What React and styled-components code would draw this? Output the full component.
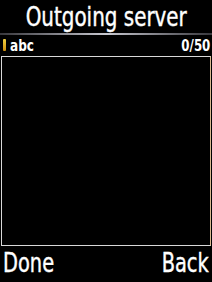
import React from "react";
import styled, { createGlobalStyle } from "styled-components";

const Global = createGlobalStyle`
  html, body { margin: 0; padding: 0; background: #000; }
  body { width: 212px; height: 282px; overflow: hidden; font-family: "DejaVu Sans Condensed", "DejaVu Sans", sans-serif; }
`;

const Screen = styled.div`
  width: 212px;
  height: 282px;
  background: #000;
  color: #fff;
  display: flex;
  flex-direction: column;
`;

const Narrow = styled.span`
  display: inline-block;
  white-space: nowrap;
  transform: scaleX(${(p) => p.$s || 0.84});
  transform-origin: ${(p) => p.$origin || "center"};
`;

const Title = styled.div`
  height: 33px;
  display: flex;
  align-items: center;
  justify-content: center;
  font-size: 27px;
  line-height: 1;
  padding-bottom: 1px;
  box-sizing: border-box;
  -webkit-text-stroke: 0.4px #fff;
`;

const Divider = styled.div`
  height: 2px;
  background: linear-gradient(to right, rgba(110,110,120,0.5), #c8c8d0 50%, rgba(110,110,120,0.5));
`;

const InputRow = styled.div`
  height: 21px;
  display: flex;
  align-items: center;
  padding: 0 2px 0 3px;
  font-size: 16px;
  font-weight: bold;
  line-height: 1;
`;

const Cursor = styled.span`
  width: 3px;
  height: 12px;
  border-radius: 1px;
  background: linear-gradient(to bottom, #f0d040, #d09010);
  margin-right: 4px;
  margin-top: -1px;
`;

const Counter = styled.span`
  margin-left: auto;
`;

const TextBox = styled.div`
  margin: 0 1px;
  height: 188px;
  border: 1px solid #d8d8d8;
  border-right-color: #d8b890;
`;

const SoftKeys = styled.div`
  flex: 1;
  display: flex;
  align-items: center;
  justify-content: space-between;
  padding: 0 3px 2px;
  font-size: 26px;
  line-height: 1;
  -webkit-text-stroke: 0.4px #fff;
`;

export default function App() {
  return (
    <>
      <Global />
      <Screen>
        <Title>
          <Narrow $s={0.82}>Outgoing server</Narrow>
        </Title>
        <Divider />
        <InputRow>
          <Cursor />
          <Narrow $s={0.84} $origin="left">abc</Narrow>
          <Counter>
            <Narrow $s={0.82} $origin="right">0/50</Narrow>
          </Counter>
        </InputRow>
        <TextBox />
        <SoftKeys>
          <Narrow $s={0.83} $origin="left">Done</Narrow>
          <Narrow $s={0.83} $origin="right">Back</Narrow>
        </SoftKeys>
      </Screen>
    </>
  );
}
